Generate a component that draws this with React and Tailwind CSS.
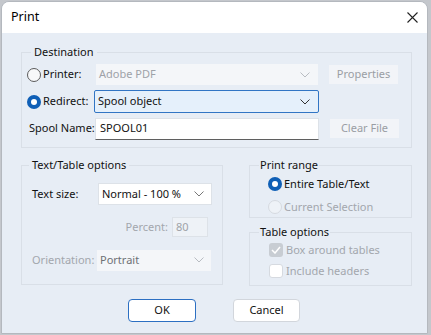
import React from "react";

const font = { fontFamily: '"Noto Sans", "Open Sans", sans-serif' };

function Chevron({ color = "#333" }) {
  return (
    <svg width="10" height="6" viewBox="0 0 10 6" fill="none">
      <path d="M0.5 0.5 L5 5 L9.5 0.5" stroke={color} strokeWidth="1" />
    </svg>
  );
}

function Radio({ checked, disabled }) {
  if (checked)
    return (
      <span className="w-[14px] h-[14px] rounded-full bg-[#0f5fb6] flex items-center justify-center shrink-0">
        <span className="w-[6px] h-[6px] rounded-full bg-white" />
      </span>
    );
  return (
    <span
      className={
        "w-[14px] h-[14px] rounded-full border shrink-0 " +
        (disabled ? "border-[#d6dae0] bg-[#eef2f7]" : "border-[#5c5c5c] bg-[#f7f8fa]")
      }
    />
  );
}

export default function App() {
  return (
    <div className="w-[431px] h-[335px] bg-[#c4c7cc] overflow-hidden text-[11px] text-[#111] whitespace-nowrap" style={font}>
      <div className="ml-[1px] mt-[1px] w-[427px] h-[333px] rounded-t-[8px] border border-[#b4b8be] bg-[#e7edf5] flex flex-col overflow-hidden">
        {/* title bar */}
        <div className="h-[31px] bg-white flex items-center justify-between pl-[9px] pr-[9px] shrink-0">
          <span className="text-[12.5px] text-black">Print</span>
          <svg width="11" height="11" viewBox="0 0 11 11">
            <path d="M0.5 0.5 L10.5 10.5 M10.5 0.5 L0.5 10.5" stroke="#222" strokeWidth="1.1" />
          </svg>
        </div>

        {/* Destination */}
        <fieldset className="ml-[19px] mt-[11px] w-[391px] border border-[#d9dfe7] pl-[5px] pr-[10px] pt-[3px] pb-[7px]">
          <legend className="ml-[4px] px-[3px] leading-[16px]">Destination</legend>
          <div className="flex flex-col gap-[4px]">
            <div className="flex items-center h-[23px]">
              <div className="w-[68px] flex items-center gap-[2px]">
                <Radio />
                <span>Printer:</span>
              </div>
              <div className="w-[222px] h-[21px] ml-[1px] bg-[#f4f6f9] flex items-center justify-between pl-[3px] pr-[8px] text-[#9ea2a8]">
                <span>Adobe PDF</span>
                <Chevron color="#b8bcc2" />
              </div>
              <div className="ml-[11px] w-[69px] h-[19px] bg-[#f2f4f8] flex items-center justify-center text-[#9a9ea4]">
                Properties
              </div>
            </div>
            <div className="flex items-center h-[23px]">
              <div className="w-[67px] flex items-center gap-[2px]">
                <Radio checked />
                <span>Redirect:</span>
              </div>
              <div className="w-[225px] h-[23px] bg-[#e5f0fb] border border-[#3175c4] rounded-[2px] flex items-center justify-between pl-[3px] pr-[8px]">
                <span>Spool object</span>
                <Chevron color="#333" />
              </div>
            </div>
            <div className="flex items-center h-[23px]">
              <div className="w-[68px] pl-[2px]">Spool Name:</div>
              <div className="w-[224px] h-[22px] bg-white border border-[#dde2e8] border-b-[#5f5f5f] flex items-center pl-[4px]">
                SPOOL01
              </div>
              <div className="ml-[11px] w-[69px] h-[19px] bg-[#f2f4f8] flex items-center justify-center text-[#9a9ea4]">
                Clear File
              </div>
            </div>
          </div>
        </fieldset>

        <div className="flex ml-[19px] mt-[9px]">
          {/* Text/Table options */}
          <fieldset className="w-[202px] h-[128px] border border-[#d9dfe7] pl-[10px] pt-[10px]">
            <legend className="ml-[-3px] px-[3px] leading-[16px]">Text/Table options</legend>
            <div className="flex flex-col gap-[11px]">
              <div className="flex items-center h-[22px]">
                <div className="w-[66px]">Text size:</div>
                <div className="w-[114px] h-[22px] bg-white border border-[#dde2e8] flex items-center justify-between pl-[3px] pr-[7px]">
                  <span>Normal - 100 %</span>
                  <Chevron color="#777" />
                </div>
              </div>
              <div className="flex items-center justify-end h-[22px] pr-[14px] gap-[4px]">
                <span className="text-[#a3a7ad]">Percent:</span>
                <div className="w-[36px] h-[20px] bg-[#eef2f7] border border-[#dde2e8] flex items-center pl-[3px] text-[#9ea2a8]">
                  80
                </div>
              </div>
              <div className="flex items-center h-[22px]">
                <div className="w-[65px] text-[#a3a7ad]">Orientation:</div>
                <div className="w-[114px] h-[21px] bg-[#f4f6f9] flex items-center justify-between pl-[3px] pr-[7px] text-[#6e7176]">
                  <span>Portrait</span>
                  <Chevron color="#b8bcc2" />
                </div>
              </div>
            </div>
          </fieldset>

          <div className="ml-[26px] w-[163px] flex flex-col">
            <fieldset className="border border-[#d9dfe7] pl-[18px] pt-[2px] pb-[1px]">
              <legend className="ml-[-9px] px-[1px] leading-[16px]">Print range</legend>
              <div className="flex flex-col gap-[5px]">
                <div className="flex items-center gap-[2px] h-[18px]">
                  <Radio checked />
                  <span>Entire Table/Text</span>
                </div>
                <div className="flex items-center gap-[2px] h-[18px] text-[#a3a7ad]">
                  <Radio disabled />
                  <span>Current Selection</span>
                </div>
              </div>
            </fieldset>
            <fieldset className="mt-[6px] border border-[#d9dfe7] pl-[19px] pt-[1px] pb-[5px]">
              <legend className="ml-[-10px] px-[1px] leading-[16px]">Table options</legend>
              <div className="flex flex-col gap-[3px] text-[#a3a7ad]">
                <div className="flex items-center gap-[3px] h-[18px]">
                  <span className="w-[14px] h-[14px] rounded-[3px] bg-[#c8cdd3] flex items-center justify-center">
                    <svg width="10" height="8" viewBox="0 0 10 8" fill="none">
                      <path d="M1 4 L4 7 L9 1" stroke="white" strokeWidth="1.5" />
                    </svg>
                  </span>
                  <span>Box around tables</span>
                </div>
                <div className="flex items-center gap-[3px] h-[18px]">
                  <span className="w-[14px] h-[14px] rounded-[3px] bg-white border border-[#d6dae0]" />
                  <span>Include headers</span>
                </div>
              </div>
            </fieldset>
          </div>
        </div>

        <div className="flex justify-center gap-[37px] mt-[13px] pr-[1px]">
          <div className="w-[68px] h-[23px] bg-white border border-[#2c6fc2] rounded-[4px] flex items-center justify-center">
            OK
          </div>
          <div className="w-[67px] h-[23px] bg-white border border-[#d2d6dc] rounded-[4px] flex items-center justify-center">
            Cancel
          </div>
        </div>
      </div>
    </div>
  );
}
